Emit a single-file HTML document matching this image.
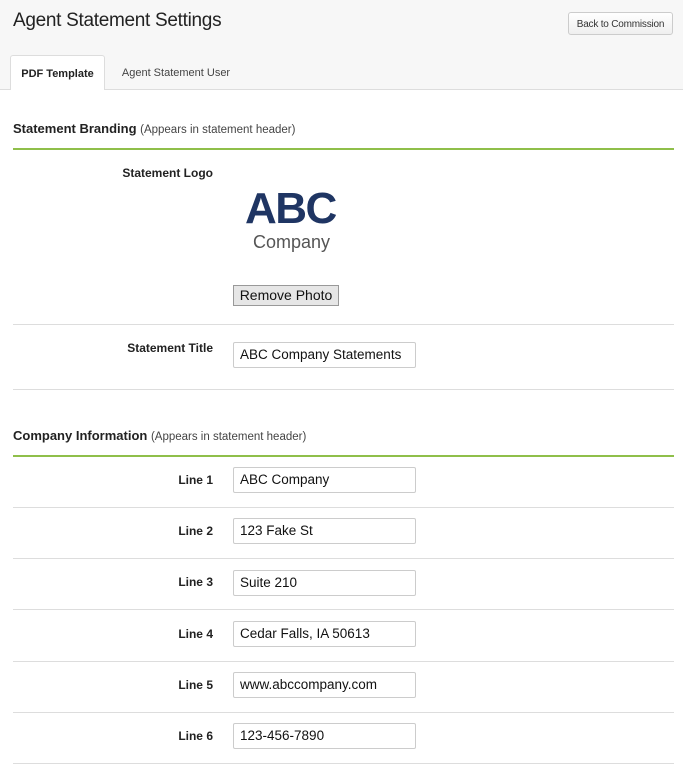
<!DOCTYPE html>
<html><head><style>
body{margin:0;width:683px;height:769px;overflow:hidden;font-family:"Liberation Sans",sans-serif;background:#fff;position:relative;color:#222}
.a{position:absolute}
.hdr{left:0;top:0;width:683px;height:89px;background:#f7f7f7;border-bottom:1px solid #ddd}
h1{position:absolute;left:13px;top:10px;margin:0;font-size:19px;font-weight:normal;color:#222;letter-spacing:-0.3px}
.btn{left:568px;top:12px;width:105px;height:23px;border:1px solid #ccc;border-radius:3px;background:linear-gradient(#fff,#efefef);font-size:10px;line-height:23px;text-align:center;color:#333;box-sizing:border-box;letter-spacing:-0.2px}
.tab{top:55px;height:35px;font-size:11px;line-height:36px;text-align:center}
.sec{left:13px;font-size:13px;font-weight:bold;color:#222}
.sec span{font-weight:normal;font-size:11.5px;color:#444}
.g{left:13px;width:661px;height:2px;background:#8fbf4a}
.hr{left:13px;width:661px;height:1px;background:#ddd}
.lb{width:200px;left:13px;text-align:right;font-size:12px;font-weight:bold;color:#222}
.in{left:233px;width:183px;height:26px;border:1px solid #ccc;border-radius:2px;box-sizing:border-box;font-size:13.5px;line-height:24px;padding-left:6px;color:#111}
</style></head><body>
<div class="a hdr"></div>
<h1>Agent Statement Settings</h1>
<div class="a btn">Back to Commission</div>
<div class="a tab" style="left:10px;width:95px;background:#fff;border:1px solid #ddd;border-bottom:none;border-radius:3px 3px 0 0;font-weight:bold;color:#222;box-sizing:border-box">PDF Template</div>
<div class="a tab" style="left:110px;width:132px;color:#444">Agent Statement User</div>

<div class="a sec" style="top:121px">Statement Branding <span>(Appears in statement header)</span></div>
<div class="a g" style="top:148px"></div>
<div class="a lb" style="top:166px">Statement Logo</div>
<div class="a" style="left:245px;top:186px;font-size:44px;font-weight:bold;color:#1f3563;letter-spacing:-1.5px;line-height:46px">ABC</div>
<div class="a" style="left:253px;top:231px;font-size:18px;color:#555;line-height:22px">Company</div>
<div class="a" style="left:233px;top:285px;width:106px;height:21px;border:1px solid #999;background:#e6e6e6;box-sizing:border-box;font-size:14px;line-height:19px;text-align:center;color:#111">Remove Photo</div>
<div class="a hr" style="top:324px"></div>
<div class="a lb" style="top:341px">Statement Title</div>
<div class="a in" style="top:342px">ABC Company Statements</div>
<div class="a hr" style="top:389px"></div>

<div class="a sec" style="top:428px">Company Information <span>(Appears in statement header)</span></div>
<div class="a g" style="top:455px"></div>

<div class="a lb" style="top:473px">Line 1</div><div class="a in" style="top:467px">ABC Company</div>
<div class="a hr" style="top:507px"></div>
<div class="a lb" style="top:524px">Line 2</div><div class="a in" style="top:518px">123 Fake St</div>
<div class="a hr" style="top:558px"></div>
<div class="a lb" style="top:575px">Line 3</div><div class="a in" style="top:570px">Suite 210</div>
<div class="a hr" style="top:609px"></div>
<div class="a lb" style="top:627px">Line 4</div><div class="a in" style="top:621px">Cedar Falls, IA 50613</div>
<div class="a hr" style="top:661px"></div>
<div class="a lb" style="top:678px">Line 5</div><div class="a in" style="top:672px">www.abccompany.com</div>
<div class="a hr" style="top:712px"></div>
<div class="a lb" style="top:729px">Line 6</div><div class="a in" style="top:723px">123-456-7890</div>
<div class="a hr" style="top:763px"></div>
</body></html>
